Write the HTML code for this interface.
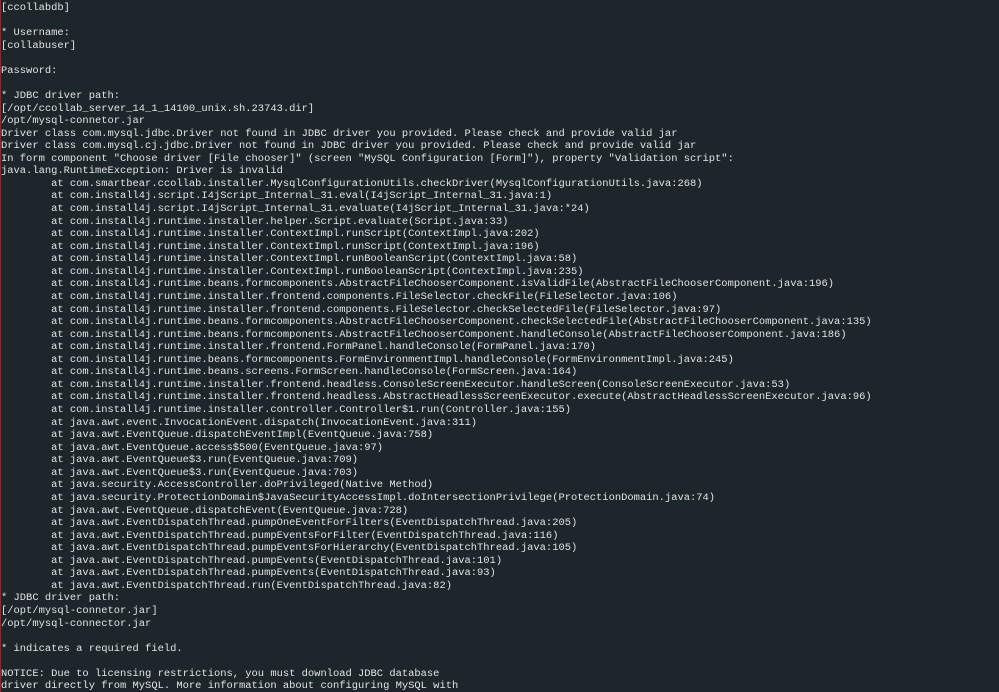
<!DOCTYPE html>
<html><head><meta charset="utf-8"><style>
html,body{margin:0;padding:0;background:#1c262b;width:999px;height:692px;overflow:hidden}
pre{margin:0;box-sizing:border-box;width:999px;height:692px;border-left:1px solid #d01010;padding:2px 0 0 0;
font-family:"Liberation Mono",monospace;font-size:10.44px;line-height:12.56px;color:#e4e4e4;tab-size:8;-moz-tab-size:8;white-space:pre}
</style></head><body><pre>[ccollabdb]

* Username:
[collabuser]

Password:

* JDBC driver path:
[/opt/ccollab_server_14_1_14100_unix.sh.23743.dir]
/opt/mysql-connetor.jar
Driver class com.mysql.jdbc.Driver not found in JDBC driver you provided. Please check and provide valid jar
Driver class com.mysql.cj.jdbc.Driver not found in JDBC driver you provided. Please check and provide valid jar
In form component "Choose driver [File chooser]" (screen "MySQL Configuration [Form]"), property "Validation script":
java.lang.RuntimeException: Driver is invalid
	at com.smartbear.ccollab.installer.MysqlConfigurationUtils.checkDriver(MysqlConfigurationUtils.java:268)
	at com.install4j.script.I4jScript_Internal_31.eval(I4jScript_Internal_31.java:1)
	at com.install4j.script.I4jScript_Internal_31.evaluate(I4jScript_Internal_31.java:*24)
	at com.install4j.runtime.installer.helper.Script.evaluate(Script.java:33)
	at com.install4j.runtime.installer.ContextImpl.runScript(ContextImpl.java:202)
	at com.install4j.runtime.installer.ContextImpl.runScript(ContextImpl.java:196)
	at com.install4j.runtime.installer.ContextImpl.runBooleanScript(ContextImpl.java:58)
	at com.install4j.runtime.installer.ContextImpl.runBooleanScript(ContextImpl.java:235)
	at com.install4j.runtime.beans.formcomponents.AbstractFileChooserComponent.isValidFile(AbstractFileChooserComponent.java:196)
	at com.install4j.runtime.installer.frontend.components.FileSelector.checkFile(FileSelector.java:106)
	at com.install4j.runtime.installer.frontend.components.FileSelector.checkSelectedFile(FileSelector.java:97)
	at com.install4j.runtime.beans.formcomponents.AbstractFileChooserComponent.checkSelectedFile(AbstractFileChooserComponent.java:135)
	at com.install4j.runtime.beans.formcomponents.AbstractFileChooserComponent.handleConsole(AbstractFileChooserComponent.java:186)
	at com.install4j.runtime.installer.frontend.FormPanel.handleConsole(FormPanel.java:170)
	at com.install4j.runtime.beans.formcomponents.FormEnvironmentImpl.handleConsole(FormEnvironmentImpl.java:245)
	at com.install4j.runtime.beans.screens.FormScreen.handleConsole(FormScreen.java:164)
	at com.install4j.runtime.installer.frontend.headless.ConsoleScreenExecutor.handleScreen(ConsoleScreenExecutor.java:53)
	at com.install4j.runtime.installer.frontend.headless.AbstractHeadlessScreenExecutor.execute(AbstractHeadlessScreenExecutor.java:96)
	at com.install4j.runtime.installer.controller.Controller$1.run(Controller.java:155)
	at java.awt.event.InvocationEvent.dispatch(InvocationEvent.java:311)
	at java.awt.EventQueue.dispatchEventImpl(EventQueue.java:758)
	at java.awt.EventQueue.access$500(EventQueue.java:97)
	at java.awt.EventQueue$3.run(EventQueue.java:709)
	at java.awt.EventQueue$3.run(EventQueue.java:703)
	at java.security.AccessController.doPrivileged(Native Method)
	at java.security.ProtectionDomain$JavaSecurityAccessImpl.doIntersectionPrivilege(ProtectionDomain.java:74)
	at java.awt.EventQueue.dispatchEvent(EventQueue.java:728)
	at java.awt.EventDispatchThread.pumpOneEventForFilters(EventDispatchThread.java:205)
	at java.awt.EventDispatchThread.pumpEventsForFilter(EventDispatchThread.java:116)
	at java.awt.EventDispatchThread.pumpEventsForHierarchy(EventDispatchThread.java:105)
	at java.awt.EventDispatchThread.pumpEvents(EventDispatchThread.java:101)
	at java.awt.EventDispatchThread.pumpEvents(EventDispatchThread.java:93)
	at java.awt.EventDispatchThread.run(EventDispatchThread.java:82)
* JDBC driver path:
[/opt/mysql-connetor.jar]
/opt/mysql-connector.jar

* indicates a required field.

NOTICE: Due to licensing restrictions, you must download JDBC database
driver directly from MySQL. More information about configuring MySQL with
</pre></body></html>
